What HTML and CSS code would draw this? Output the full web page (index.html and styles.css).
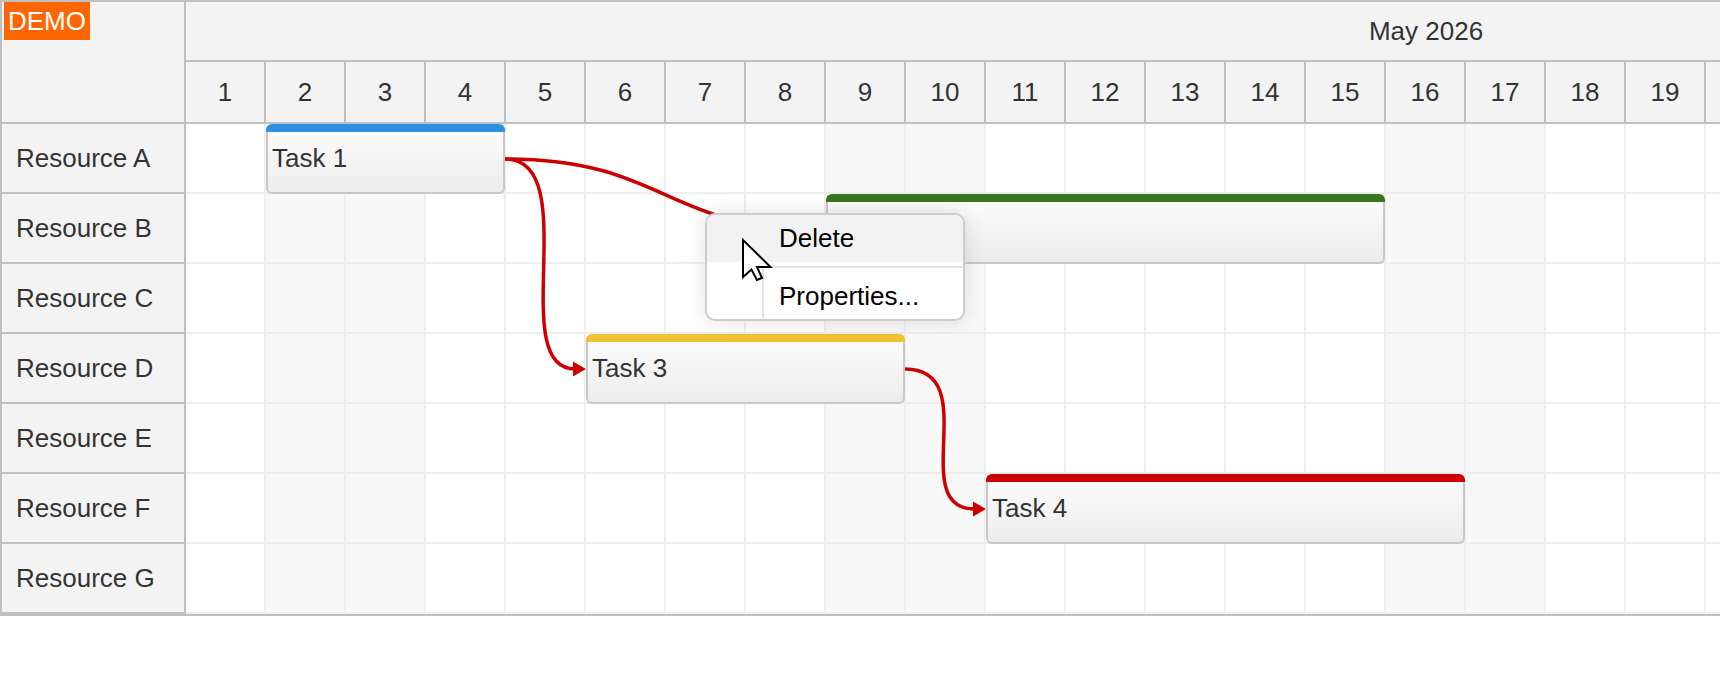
FILE: index.html
```html
<!DOCTYPE html>
<html lang="en">
<head>
    <meta charset="UTF-8">
    <meta name="viewport" content="width=device-width, initial-scale=1.0">
    <title>Scheduler Demo</title>
    <link rel="stylesheet" href="styles.css">
</head>
<body>
    <div class="gantt">
        <div class="scheduler">
            <div class="resources">
                <div class="corner">
                    <span class="demo">DEMO</span>
                </div>
                <div class="resource">Resource A</div>
                <div class="resource">Resource B</div>
                <div class="resource">Resource C</div>
                <div class="resource">Resource D</div>
                <div class="resource">Resource E</div>
                <div class="resource">Resource F</div>
                <div class="resource">Resource G</div>
            </div>
            <div class="timeline">
                <div class="month">May 2026</div>
                <div class="days">
                    <div class="day">1</div><div class="day">2</div><div class="day">3</div><div class="day">4</div>
                    <div class="day">5</div><div class="day">6</div><div class="day">7</div><div class="day">8</div>
                    <div class="day">9</div><div class="day">10</div><div class="day">11</div><div class="day">12</div>
                    <div class="day">13</div><div class="day">14</div><div class="day">15</div><div class="day">16</div>
                    <div class="day">17</div><div class="day">18</div><div class="day">19</div><div class="day">20</div>
                    <div class="day">21</div><div class="day">22</div><div class="day">23</div><div class="day">24</div>
                    <div class="day">25</div><div class="day">26</div><div class="day">27</div><div class="day">28</div>
                    <div class="day">29</div><div class="day">30</div><div class="day">31</div>
                </div>
                <div class="row">
                    <div class="event" style="left: 80px; width: 239px;">
                        <div class="event-bar bar-blue"></div>
                        <div class="event-text">Task 1</div>
                    </div>
                </div>
                <div class="row">
                    <div class="event" style="left: 640px; width: 559px;">
                        <div class="event-bar bar-green"></div>
                        <div class="event-text">Task 2</div>
                    </div>
                </div>
                <div class="row"></div>
                <div class="row">
                    <div class="event" style="left: 400px; width: 319px;">
                        <div class="event-bar bar-yellow"></div>
                        <div class="event-text">Task 3</div>
                    </div>
                </div>
                <div class="row"></div>
                <div class="row">
                    <div class="event" style="left: 800px; width: 479px;">
                        <div class="event-bar bar-red"></div>
                        <div class="event-text">Task 4</div>
                    </div>
                </div>
                <div class="row"></div>
            </div>
        </div>

        <!-- links between tasks -->
        <svg class="links" width="1720" height="620" viewBox="0 0 1720 620">
            <path d="M505 159 C665 159 665 229 815 229" />
            <polygon points="813,221.5 813,236.5 826,229" />
            <path d="M505 159 C585 159 505 369 575 369" />
            <polygon points="573,361.5 573,376.5 586,369" />
            <path d="M905 369 C985 369 905 509 975 509" />
            <polygon points="973,501.5 973,516.5 986,509" />
        </svg>

        <div class="menu">
            <div class="menu-item active">Delete</div>
            <div class="menu-separator"></div>
            <div class="menu-item menu-item-last">Properties...</div>
        </div>

        <svg class="cursor" width="32" height="45" viewBox="0 0 32 45">
            <path d="M2 2 L2 39 L10.5 31.5 L16 42 L21 40 L16 29 L29.5 29 Z" />
        </svg>
    </div>
</body>
</html>
```

FILE: styles.css
```css
body {
    margin: 0;
    font-family: "Liberation Sans", Arial, sans-serif;
    font-size: 26px;
    color: #333;
    background-color: white;
}
.gantt {
    position: relative;
    width: 1720px;
    overflow: hidden;
}
.scheduler {
    display: flex;
    overflow: hidden;
    border: 2px solid #c0c0c0;
    border-right: 0;
}
.resources {
    flex: none;
    width: 184px;
    box-sizing: border-box;
    background-color: #f3f3f3;
    border-right: 2px solid #c0c0c0;
}
.corner {
    position: relative;
    height: 122px;
    border-bottom: 2px solid #c0c0c0;
    box-sizing: border-box;
}
.demo {
    position: absolute;
    top: 0;
    left: 2px;
    padding: 2px 4px;
    line-height: 34px;
    background-color: #ff6600;
    color: white;
}
.resource {
    display: flex;
    align-items: center;
    height: 70px;
    padding-left: 14px;
    border-bottom: 2px solid #c0c0c0;
    box-sizing: border-box;
}
.timeline {
    flex: none;
    width: 2480px;
}
.month {
    display: flex;
    align-items: center;
    justify-content: center;
    height: 60px;
    background-color: #f3f3f3;
    border-bottom: 2px solid #c0c0c0;
    box-sizing: border-box;
}
.days {
    display: flex;
    height: 62px;
    border-bottom: 2px solid #c0c0c0;
    box-sizing: border-box;
    background-color: #f3f3f3;
}
.day {
    flex: none;
    width: 80px;
    display: flex;
    align-items: center;
    justify-content: center;
    border-right: 2px solid #c0c0c0;
    box-sizing: border-box;
}
.row {
    position: relative;
    height: 70px;
    border-bottom: 2px solid #eeeeee;
    box-sizing: border-box;
    background-image:
        repeating-linear-gradient(90deg, transparent 0 78px, #eeeeee 78px 80px),
        repeating-linear-gradient(90deg, #ffffff 0 80px, #f8f8f8 80px 240px, #ffffff 240px 560px);
}
.event {
    position: absolute;
    top: 0;
    height: 70px;
    display: flex;
    flex-direction: column;
    border: 2px solid #c8c8c8;
    border-top: 0;
    border-radius: 6px;
    box-sizing: border-box;
    background: linear-gradient(#fdfdfd, #ececec);
    z-index: 1;
}
.event-bar {
    height: 8px;
    margin: 0 -2px;
    border-radius: 6px 6px 0 0;
}
.bar-blue { background-color: #2a92e0; }
.bar-green { background-color: #38761d; }
.bar-yellow { background-color: #f1c232; }
.bar-red { background-color: #cc0000; }
.event-text {
    margin-top: 11px;
    padding: 0 4px;
    line-height: 30px;
    white-space: nowrap;
    overflow: hidden;
}
.links {
    position: absolute;
    top: 0;
    left: 0;
    z-index: 2;
    pointer-events: none;
}
.links path {
    fill: none;
    stroke: #cc0000;
    stroke-width: 3.5;
}
.links polygon {
    fill: #cc0000;
}
.menu {
    position: absolute;
    left: 705px;
    top: 213px;
    z-index: 3;
    width: 260px;
    height: 108px;
    box-sizing: border-box;
    border: 2px solid #cccccc;
    border-radius: 10px;
    background-color: white;
    box-shadow: 0 0 20px rgba(0,0,0,0.12);
    overflow: hidden;
    color: #000;
}
.menu::before {
    content: "";
    position: absolute;
    top: 0;
    bottom: 0;
    left: 55px;
    width: 2px;
    background-color: #e2e2e2;
}
.menu-item {
    position: relative;
    height: 47px;
    line-height: 46px;
    padding-left: 72px;
}
.menu-item.active {
    background-color: #f2f2f2;
}
.menu-item-last {
    height: 49px;
    line-height: 52px;
}
.menu-separator {
    height: 2px;
    margin: 4px 0 2px 55px;
    background-color: #e2e2e2;
}
.cursor {
    position: absolute;
    left: 741px;
    top: 238px;
    z-index: 4;
}
.cursor path {
    fill: white;
    stroke: black;
    stroke-width: 2;
    stroke-linejoin: miter;
}
```
